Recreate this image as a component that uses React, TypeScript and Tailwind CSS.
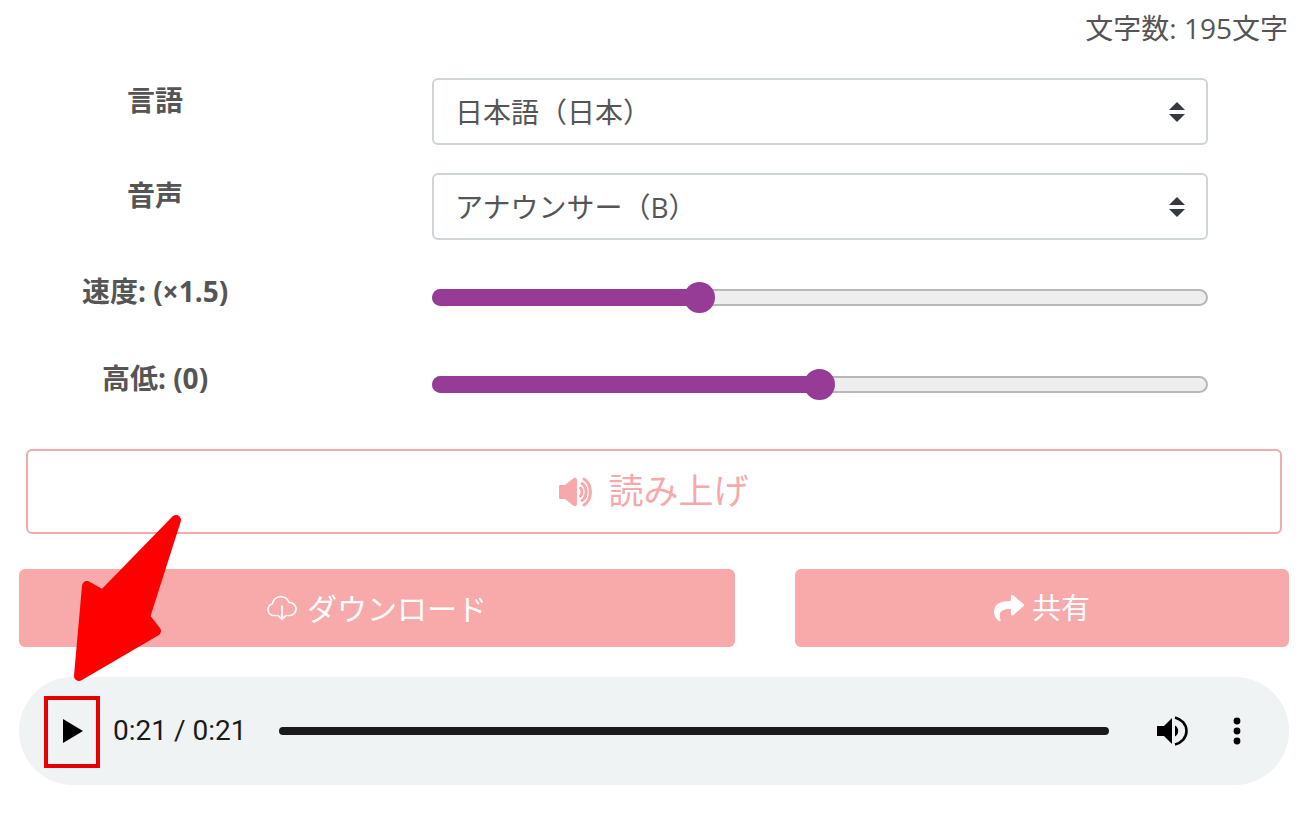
import React, { FC } from 'react';
import { FaShare } from 'react-icons/fa';

const font = "font-['Open_Sans','Noto_Sans_CJK_JP',sans-serif]";

const SelectRow: FC<{ label: string; value: string }> = ({ label, value }) => (
  <div className="flex items-start">
    <div className="w-[310px] text-center text-[28px] leading-[44px] font-bold text-[#555]">{label}</div>
    <div className="relative ml-[122px] w-[776px]">
      <select className="h-[67px] w-full appearance-none rounded-[6px] border-2 border-[#ced4da] bg-white pl-[21px] pt-[1px] text-[28px] text-[#555] outline-none">
        <option>{value}</option>
      </select>
      <svg viewBox="0 0 4 5" className="absolute right-[23px] top-[24px] h-[20px] w-[16px]">
        <path fill="#343a40" d="M2 0L0 2h4zm0 5L0 3h4z" />
      </svg>
    </div>
  </div>
);

const SliderRow: FC<{ label: string; fillClass: string; thumbClass: string }> = ({ label, fillClass, thumbClass }) => (
  <div className="flex h-[56px] items-start">
    <div className="w-[310px] text-center text-[28px] leading-[44px] font-bold text-[#555]">{label}</div>
    <div className="relative ml-[122px] mt-[20px] h-[17px] w-[776px] rounded-full border-2 border-[#b8b8b8] bg-[#eeeeee]">
      <div className={`absolute -left-[2px] -top-[2px] h-[17px] rounded-l-full bg-[#963c96] ${fillClass}`} />
      <div className={`absolute -top-[9px] h-[31px] w-[31px] rounded-full bg-[#963c96] ${thumbClass}`} />
    </div>
  </div>
);

const App: FC = () => {
  return (
    <div className={`relative h-[814px] w-[1308px] overflow-hidden bg-white ${font}`}>
      <div className="flex h-[78px] justify-end pr-[20px] pt-[7px] text-[28px] leading-[42px] text-[#555]">文字数: 195文字</div>

      <SelectRow label="言語" value="日本語（日本）" />
      <div className="mt-[28px]">
        <SelectRow label="音声" value="アナウンサー（B）" />
      </div>

      <div className="mt-[29px]">
        <SliderRow label="速度: (×1.5)" fillClass="w-[268px]" thumbClass="left-[250px]" />
      </div>
      <div className="mt-[31px]">
        <SliderRow label="高低: (0)" fillClass="w-[388px]" thumbClass="left-[370px]" />
      </div>

      <button className="ml-[26px] mt-[37px] flex h-[85px] w-[1256px] items-center justify-center gap-[14px] rounded-[6px] border-2 border-[#f4a9ac] bg-white text-[35px] text-[#f7a8aa]">
        <svg viewBox="0 0 35 30" className="h-[30px] w-[35px]">
          <path fill="currentColor" d="M0 9.500C0 8.500 .5 8 1.500 8H6L14.500 1.200C16 .2 18 1 18 3V27C18 29 16 29.800 14.500 28.800L6 22H1.500C.5 22 0 21.500 0 20.500Z" />
          <g fill="none" stroke="currentColor" strokeWidth="3" strokeLinecap="round">
            <path d="M21.500 11C23.500 12.500 23.500 17.500 21.500 19" />
            <path d="M23 6.500C28.500 10 28.500 20 23 23.500" />
            <path d="M25 2C33.500 7.500 33.500 22.500 25 28" />
          </g>
        </svg>
        <span>読み上げ</span>
      </button>

      <div className="ml-[19px] mt-[35px] flex w-[1270px] justify-between">
        <button className="flex h-[78px] w-[716px] items-center justify-center gap-[10px] rounded-[6px] bg-[#f8a9aa] text-[30px] text-white">
          <svg viewBox="0 0 30 26" className="h-[26px] w-[30px]" fill="none" stroke="currentColor" strokeWidth="1.700" strokeLinecap="round" strokeLinejoin="round">
            <path d="M9 20.500H7A6 6 0 0 1 5.500 8.700A8.500 8.500 0 0 1 22 7.500A6.500 6.500 0 0 1 23 20.500H21" />
            <path d="M15 11V24.500M11 20.500L15 24.500L19 20.500" />
          </svg>
          <span>ダウンロード</span>
        </button>
        <button className="flex h-[78px] w-[494px] items-center justify-center gap-[8px] rounded-[6px] bg-[#f8a9aa] text-[29px] text-white">
          <FaShare className="h-[30px] w-[30px]" />
          <span>共有</span>
        </button>
      </div>

      {/* audio player */}
      <div className="ml-[19px] mt-[30px] flex h-[108px] w-[1270px] items-center rounded-full bg-[#eff3f4] font-['Roboto',sans-serif] text-[#1a1a1a]">
        <svg viewBox="0 0 20 24" className="ml-[44px] h-[24px] w-[20px]">
          <path fill="#000" d="M0 0L20 12L0 24z" />
        </svg>
        <span className="ml-[30px] text-[28px]">0:21 / 0:21</span>
        <div className="ml-[33px] h-[8px] w-[830px] rounded-full bg-[#1a1a1a]" />
        <svg viewBox="0 0 32 30" className="ml-[48px] h-[30px] w-[32px]">
          <path fill="#000" d="M0 10h7L15 2v26L7 20H0z" />
          <path fill="#000" d="M18 9.500c2 1 3.200 3.200 3.200 5.500s-1.200 4.500-3.200 5.500z" />
          <path fill="none" stroke="#000" strokeWidth="2.600" d="M18 1.500C24 3 29.500 8 29.500 15S24 27 18 28.500" />
        </svg>
        <svg viewBox="0 0 10 28" className="ml-[43px] h-[28px] w-[10px]">
          <circle cx="5" cy="4" r="3.400" fill="#000" />
          <circle cx="5" cy="14" r="3.400" fill="#000" />
          <circle cx="5" cy="24" r="3.400" fill="#000" />
        </svg>
      </div>

      {/* red annotation over the play button */}
      <div className="absolute left-[44px] top-[696px] h-[72px] w-[56px] border-[4px] border-[#e60000]" />
      <svg viewBox="0 0 1308 814" className="pointer-events-none absolute left-0 top-0 h-[814px] w-[1308px]">
        <polygon
          points="176,520 145,617 156,631 79,676 87,586 103,595"
          fill="#ff0000"
          stroke="#ff0000"
          strokeWidth="10"
          strokeLinejoin="round"
        />
      </svg>
    </div>
  );
};

export default App;
